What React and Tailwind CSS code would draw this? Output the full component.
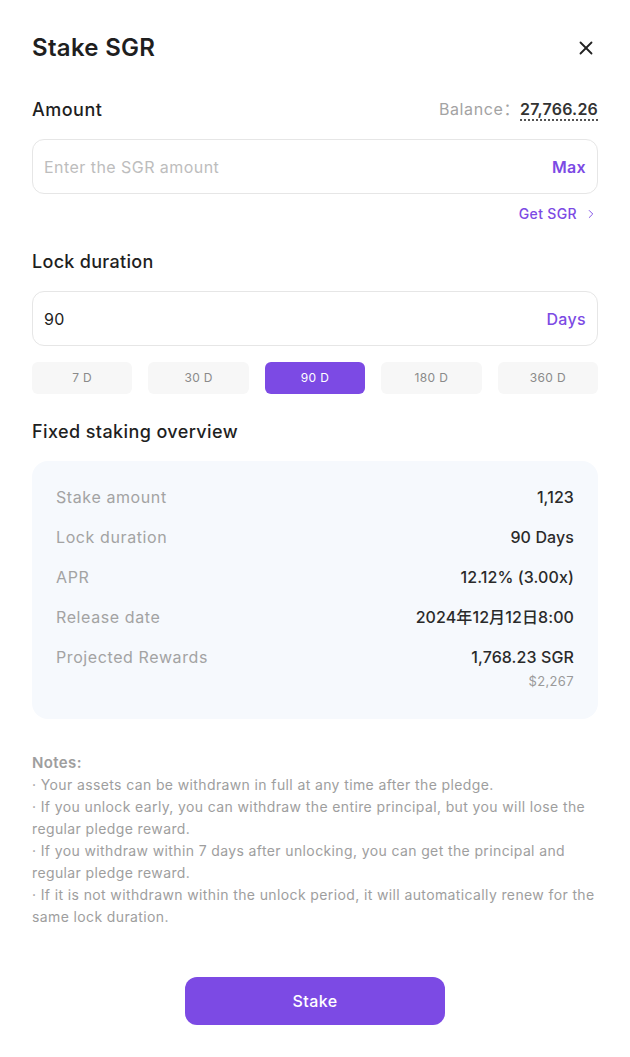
import { X, ChevronRight } from "lucide-react"

const durations = ["7 D", "30 D", "90 D", "180 D", "360 D"]

const overview = [
  { label: "Stake amount", value: "1,123" },
  { label: "Lock duration", value: "90 Days" },
  { label: "APR", value: "12.12% (3.00x)" },
  { label: "Release date", value: "2024年12月12日8:00" },
  { label: "Projected Rewards", value: "1,768.23 SGR", sub: "$2,267" },
]

const notes = [
  "Your assets can be withdrawn in full at any time after the pledge.",
  "If you unlock early, you can withdraw the entire principal, but you will lose the regular pledge reward.",
  "If you withdraw within 7 days after unlocking, you can get the principal and regular pledge reward.",
  "If it is not withdrawn within the unlock period, it will automatically renew for the same lock duration.",
]

export default function App() {
  return (
    <div
      className="w-[630px] min-h-[1057px] bg-white px-8 pt-[33px] pb-8 text-[#1f1f1f] tracking-[0.35px]"
      style={{ fontFamily: "Inter, 'Noto Sans CJK SC', sans-serif" }}
    >
      <header className="flex items-center justify-between h-[30px]">
        <h1 className="text-[24px] font-semibold tracking-[0.3px]">Stake SGR</h1>
        <X className="w-[22px] h-[22px] mr-[1px] text-[#222]" strokeWidth={2} />
      </header>

      <div className="mt-[34px] flex items-center justify-between h-[24px]">
        <span className="text-[18px] font-medium tracking-[0.5px]">Amount</span>
        <span className="text-[16px] text-[#a3a3a3] tracking-[0.6px]">
          Balance：
          <span className="font-semibold text-[#333] border-b-2 border-dotted border-[#555] tracking-[0.2px]">27,766.26</span>
        </span>
      </div>

      <div className="mt-[18px] h-[55px] rounded-xl border border-[#e6e6e6] flex items-center justify-between px-[11px]">
        <span className="text-[16px] text-[#bdbdbd] tracking-[0.45px]">Enter the SGR amount</span>
        <span className="text-[16px] font-semibold text-[#7c4ae4]">Max</span>
      </div>

      <div className="mt-[9px] flex justify-end items-center gap-[7px] text-[14px] font-medium text-[#7c4ae4]">
        <span>Get SGR</span>
        <ChevronRight className="w-[14px] h-[14px] text-[#7c4ae4]" strokeWidth={1.6} />
      </div>

      <div className="mt-[25px] h-[24px] flex items-center text-[18px] font-medium tracking-[0.3px]">Lock duration</div>

      <div className="mt-[18px] h-[55px] rounded-xl border border-[#e6e6e6] flex items-center justify-between px-[11px]">
        <span className="text-[16px] text-[#222]">90</span>
        <span className="text-[16px] font-medium text-[#7c4ae4]">Days</span>
      </div>

      <div className="mt-[16px] grid grid-cols-5 gap-4">
        {durations.map((d) => (
          <div
            key={d}
            className={
              d === "90 D"
                ? "h-8 rounded-md flex items-center justify-center text-[12px] bg-[#7c4ae4] text-white"
                : "h-8 rounded-md flex items-center justify-center text-[12px] bg-[#f7f7f7] text-[#8a8a8a]"
            }
          >
            {d}
          </div>
        ))}
      </div>

      <div className="mt-[25px] h-[24px] flex items-center text-[18px] font-medium tracking-[0.4px]">Fixed staking overview</div>

      <div className="mt-[18px] rounded-2xl bg-[#f6f9fd] px-6 pt-[24px] pb-[27px]">
        {overview.map((row, i) => (
          <div key={row.label} className={i > 0 ? "mt-4" : ""}>
            <div className="flex items-center justify-between h-[24px]">
              <span className="text-[16px] text-[#a3a3a3] tracking-[0.6px]">{row.label}</span>
              <span className="text-[16px] font-medium text-[#2a2a2a] tracking-[0.1px]">{row.value}</span>
            </div>
            {row.sub && (
              <div className="text-right text-[13px] text-[#9a9a9a] mt-[3px]">{row.sub}</div>
            )}
          </div>
        ))}
      </div>

      <div className="mt-[33px] text-[14px] leading-[22px] text-[#9e9e9e] tracking-[0.38px]">
        <div className="font-semibold text-[15px]">Notes:</div>
        {notes.map((n) => (
          <p key={n}>· {n}</p>
        ))}
      </div>

      <div className="mt-[49px] flex justify-center">
        <button className="w-[260px] h-12 rounded-xl bg-[#7c4ae4] text-white text-[16px] font-medium tracking-[0.4px]">
          Stake
        </button>
      </div>
    </div>
  )
}
